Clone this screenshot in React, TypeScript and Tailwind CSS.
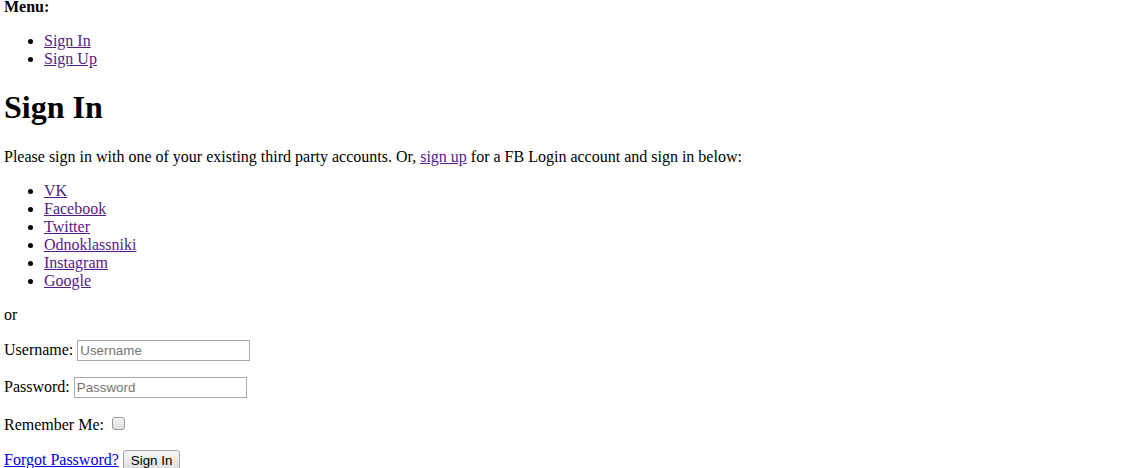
import React from "react";

const visited = "text-[#551A8B] underline";

export default function App() {
  const providers = ["VK", "Facebook", "Twitter", "Odnoklassniki", "Instagram", "Google"];
  return (
    <div className="min-h-screen bg-white px-[4px] font-['Liberation_Serif','Times_New_Roman',serif] text-[16px] leading-[normal] text-black">
      <div className="-mt-[2px] font-bold">Menu:</div>
      <ul className="my-4 list-disc pl-10">
        <li>
          <a href="#" className={visited}>Sign In</a>
        </li>
        <li>
          <a href="#" className={visited}>Sign Up</a>
        </li>
      </ul>
      <h1 className="my-[21.44px] text-[32px] font-bold leading-[normal]">Sign In</h1>
      <p className="my-4">
        Please sign in with one of your existing third party accounts. Or,{" "}
        <a href="#" className={visited}>sign up</a> for a FB Login account and sign in below:
      </p>
      <ul className="my-4 list-disc pl-10">
        {providers.map((p) => (
          <li key={p}>
            <a href="#" className={visited}>{p}</a>
          </li>
        ))}
      </ul>
      <p className="my-4">or</p>
      <p className="my-4">
        Username:{" "}
        <input
          type="text"
          placeholder="Username"
          className="h-[21px] w-[173px] border border-[#a9a9a9] bg-white px-[2px] py-[1px] font-['Liberation_Sans',Arial,sans-serif] text-[13.33px] placeholder:text-[#757575]"
        />
      </p>
      <p className="my-4">
        Password:{" "}
        <input
          type="password"
          placeholder="Password"
          className="h-[21px] w-[173px] border border-[#a9a9a9] bg-white px-[2px] py-[1px] font-['Liberation_Sans',Arial,sans-serif] text-[13.33px] placeholder:text-[#757575]"
        />
      </p>
      <p className="my-4">
        Remember Me:{" "}
        <input
          type="checkbox"
          className="mt-[3px] mb-0 ml-[4px] mr-[3px] h-[13px] w-[13px] appearance-none rounded-[3px] border border-[#9a9a9a] bg-gradient-to-b from-[#f4f4f4] to-[#dedede] align-baseline"
        />
      </p>
      <p className="my-4">
        <a href="#" className="text-[#0000EE] underline">Forgot Password?</a>{" "}
        <button
          type="button"
          className="rounded-[3px] border border-[#a6a6a6] bg-gradient-to-b from-[#f6f6f6] to-[#dddddd] px-[7px] pt-[2px] pb-[2px] font-['Liberation_Sans',Arial,sans-serif] text-[13.33px] leading-[normal] text-black"
        >
          Sign In
        </button>
      </p>
    </div>
  );
}
